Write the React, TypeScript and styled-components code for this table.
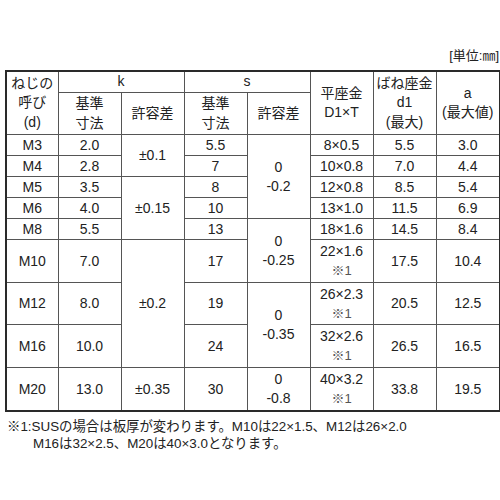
import styled, { createGlobalStyle } from "styled-components";

// ページ全体の初期化
const Global = createGlobalStyle`
  body {
    margin: 0;
    background: #fff;
    font-family: "Liberation Sans", Arial, "Noto Sans CJK JP", sans-serif;
    color: #222;
  }
`;

const Page = styled.div`
  width: 500px;
  padding: 47px 0 0 5px;
  box-sizing: border-box;
`;

// 右上の単位表示
const Unit = styled.div`
  width: 494px;
  text-align: right;
  font-size: 13px;
  line-height: 18px;
  margin-bottom: 5px;
`;

const Table = styled.table`
  width: 494px;
  table-layout: fixed;
  border-collapse: collapse;
  border: 2px solid #2a2a2a;
  font-size: 14px;
`;

const Cell = styled.td<{ $h?: number }>`
  border: 1px solid #555;
  padding: 0;
  text-align: center;
  vertical-align: middle;
  line-height: 19px;
  height: ${(p) => (p.$h ? `${p.$h}px` : "auto")};
  white-space: nowrap;
`;

const Head = styled(Cell).attrs({ as: "th" })`
  font-weight: normal;
  line-height: 19.5px;
`;

const Mark = styled.span`
  color: #555;
  font-size: 13px;
`;

// 注釈
const Note = styled.div`
  font-size: 13.4px;
  line-height: 17px;
  margin-top: 6px;
  padding-left: 2px;
  white-space: nowrap;
`;

const Indent = styled.div`
  padding-left: 26px;
`;

type Row = {
  m: string;
  k: string;
  kt?: { v: string; span: number };
  s: string;
  st?: { a: string; b: string; span: number };
  d1: string;
  note?: boolean;
  sp: string;
  a: string;
  h: number;
};

const rows: Row[] = [
  { m: "M3", k: "2.0", kt: { v: "±0.1", span: 2 }, s: "5.5", st: { a: "0", b: "-0.2", span: 4 }, d1: "8×0.5", sp: "5.5", a: "3.0", h: 20 },
  { m: "M4", k: "2.8", s: "7", d1: "10×0.8", sp: "7.0", a: "4.4", h: 20 },
  { m: "M5", k: "3.5", kt: { v: "±0.15", span: 3 }, s: "8", d1: "12×0.8", sp: "8.5", a: "5.4", h: 20 },
  { m: "M6", k: "4.0", s: "10", d1: "13×1.0", sp: "11.5", a: "6.9", h: 20 },
  { m: "M8", k: "5.5", s: "13", st: { a: "0", b: "-0.25", span: 2 }, d1: "18×1.6", sp: "14.5", a: "8.4", h: 20 },
  { m: "M10", k: "7.0", kt: { v: "±0.2", span: 3 }, s: "17", d1: "22×1.6", note: true, sp: "17.5", a: "10.4", h: 42 },
  { m: "M12", k: "8.0", s: "19", st: { a: "0", b: "-0.35", span: 2 }, d1: "26×2.3", note: true, sp: "20.5", a: "12.5", h: 41 },
  { m: "M16", k: "10.0", s: "24", d1: "32×2.6", note: true, sp: "26.5", a: "16.5", h: 42 },
  { m: "M20", k: "13.0", kt: { v: "±0.35", span: 1 }, s: "30", st: { a: "0", b: "-0.8", span: 1 }, d1: "40×3.2", note: true, sp: "33.8", a: "19.5", h: 42 },
];

export default function App() {
  return (
    <Page>
      <Global />
      <Unit>[単位:㎜]</Unit>
      <Table>
        <colgroup>
          <col style={{ width: 52 }} />
          <col style={{ width: 63 }} />
          <col style={{ width: 63 }} />
          <col style={{ width: 63 }} />
          <col style={{ width: 63 }} />
          <col style={{ width: 63 }} />
          <col style={{ width: 63 }} />
          <col style={{ width: 64 }} />
        </colgroup>
        <thead>
          <tr>
            <Head rowSpan={2}>
              ねじの<br />呼び<br />(d)
            </Head>
            <Head colSpan={2} $h={20}>k</Head>
            <Head colSpan={2}>s</Head>
            <Head rowSpan={2}>
              平座金<br />D1×T
            </Head>
            <Head rowSpan={2}>
              ばね座金<br />d1<br />(最大)
            </Head>
            <Head rowSpan={2}>
              a<br />(最大値)
            </Head>
          </tr>
          <tr>
            <Head $h={41}>
              基準<br />寸法
            </Head>
            <Head>許容差</Head>
            <Head>
              基準<br />寸法
            </Head>
            <Head>許容差</Head>
          </tr>
        </thead>
        <tbody>
          {rows.map((r) => (
            <tr key={r.m}>
              <Cell $h={r.h}>{r.m}</Cell>
              <Cell>{r.k}</Cell>
              {r.kt && <Cell rowSpan={r.kt.span}>{r.kt.v}</Cell>}
              <Cell>{r.s}</Cell>
              {r.st && (
                <Cell rowSpan={r.st.span}>
                  {r.st.a}
                  <br />
                  {r.st.b}
                </Cell>
              )}
              <Cell>
                {r.d1}
                {r.note && (
                  <>
                    <br />
                    <Mark>※1</Mark>
                  </>
                )}
              </Cell>
              <Cell>{r.sp}</Cell>
              <Cell>{r.a}</Cell>
            </tr>
          ))}
        </tbody>
      </Table>
      <Note>
        <div>※1:SUSの場合は板厚が変わります。M10は22×1.5、M12は26×2.0</div>
        <Indent>M16は32×2.5、M20は40×3.0となります。</Indent>
      </Note>
    </Page>
  );
}
